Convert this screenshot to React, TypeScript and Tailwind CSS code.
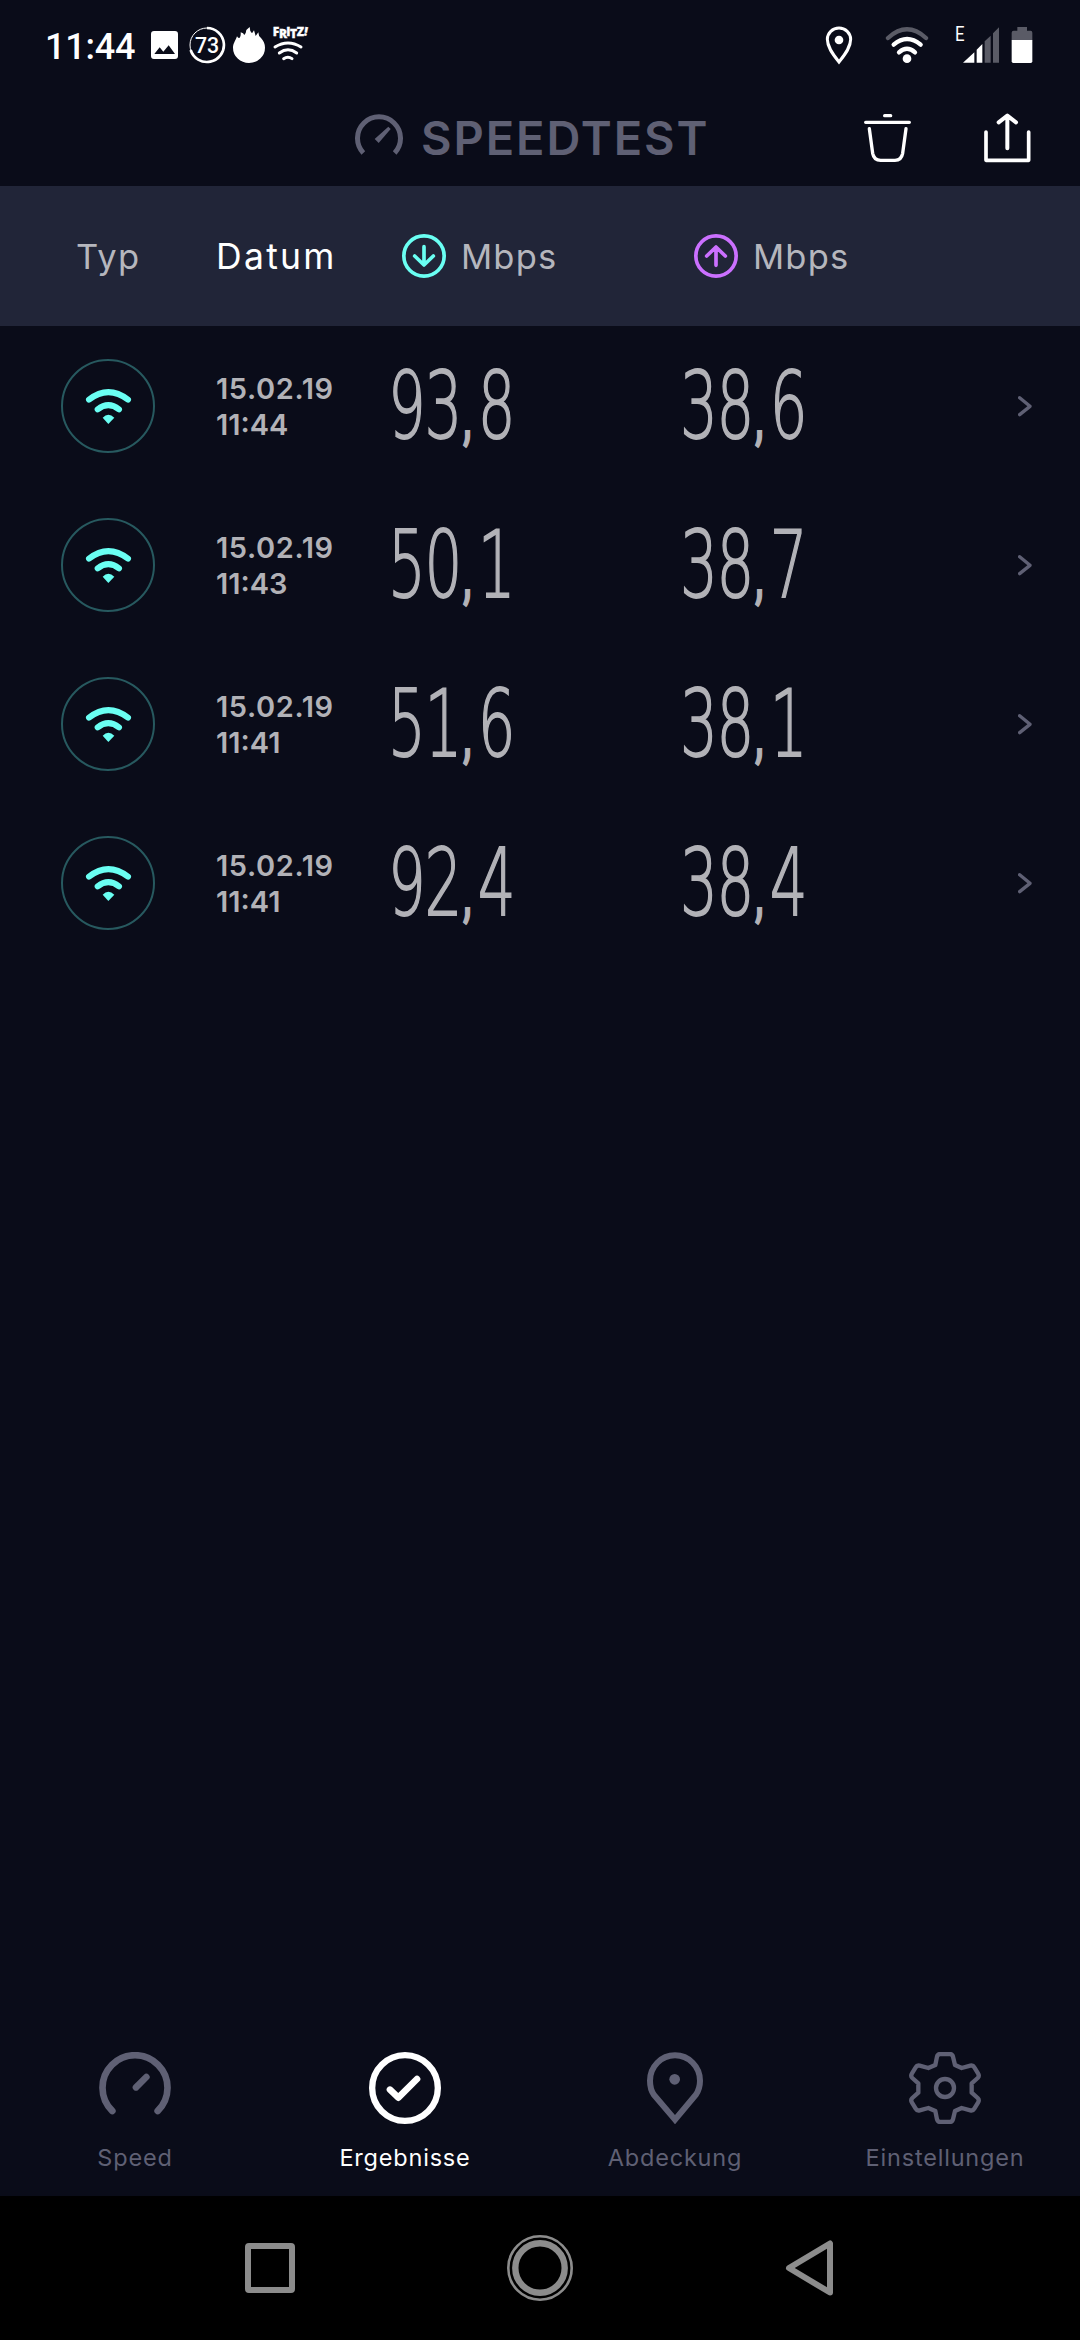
import type { ReactNode } from "react";

type Result = {
  date: string;
  time: string;
  download: string;
  upload: string;
};

const results: Result[] = [
  { date: "15.02.19", time: "11:44", download: "93,8", upload: "38,6" },
  { date: "15.02.19", time: "11:43", download: "50,1", upload: "38,7" },
  { date: "15.02.19", time: "11:41", download: "51,6", upload: "38,1" },
  { date: "15.02.19", time: "11:41", download: "92,4", upload: "38,4" },
];

export default function App() {
  return (
    <div className="flex h-[2340px] w-[1080px] flex-col overflow-hidden bg-[#0a0c19] font-['Inter',sans-serif]">
      <StatusBar />
      <AppBar />
      <TableHeader />
      <main className="flex-1">
        {results.map((result, index) => (
          <ResultRow key={index} result={result} />
        ))}
      </main>
      <TabBar />
      <SystemNav />
    </div>
  );
}

function StatusBar() {
  return (
    <header className="flex h-[90px] items-start text-white">
      <span className="ml-[45px] mt-[26px] w-[106px] font-['Roboto',sans-serif] text-[36px] leading-[42px] font-medium tracking-[-0.2px]">
        11:44
      </span>
      <svg className="mt-[31px] h-7 w-[27px]" viewBox="0 0 81 84" fill="currentColor">
        <path fillRule="evenodd" d="M9 0H72Q81 0 81 9V75Q81 84 72 84H9Q0 84 0 75V9Q0 0 9 0ZM10 69H72L53 43L37 62L26 49Z" />
      </svg>
      <svg className="ml-[10px] mt-[26px] h-[38px] w-[38px]" viewBox="0 0 114 114" fill="none" stroke="currentColor">
        <circle cx="57" cy="57" r="51" strokeWidth="3" />
        <path d="M57 6A51 51 0 1 1 8 72" strokeWidth="8" />
        <text x="57" y="80" textAnchor="middle" fill="currentColor" stroke="none" className="font-['Roboto',sans-serif] text-[64px] font-medium">
          73
        </text>
      </svg>
      <svg className="ml-[7px] mt-[27px] h-9 w-8" viewBox="0 0 96 108" fill="currentColor">
        <path d="M12 28Q16 35 20 32Q24 29 23 16Q32 18 34 24Q39 20 40 9L50 0Q50 13 57 19L63 10Q66 20 68 27L76 16Q76 27 84 33C92 43 96 50 96 62A48 46 0 0 1 0 62C0 50 7 42 12 28Z" />
      </svg>
      <svg className="ml-[7px] mt-[13px] h-12 w-[44px]" viewBox="0 -36 132 144" fill="none" stroke="currentColor" strokeWidth="9" strokeLinecap="round">
        <g fill="currentColor" stroke="currentColor" strokeWidth="1" className="font-['Open_Sans',sans-serif] text-[36px] font-extrabold">
          <text x="2" y="33">F</text>
          <text x="21" y="38">R</text>
          <text x="43" y="33">I</text>
          <text x="54" y="39">T</text>
          <text x="74" y="32">Z</text>
          <text x="96" y="31" transform="rotate(10 98 24)">!</text>
        </g>
        <path d="M9 66Q48 42 87 66M22 84Q48 65 74 84M35 101Q48 92 60 101" />
      </svg>

      <svg className="ml-auto mt-[26px] h-[39px] w-7" viewBox="76 48 84 117" fill="none" stroke="currentColor" strokeWidth="9">
        <path d="M118 156C97 130 83 110 83 88A35 34 0 0 1 153 88C153 110 139 130 118 156Z" />
        <circle cx="118" cy="90" r="13" fill="currentColor" stroke="none" />
      </svg>
      <svg className="ml-[32px] mt-[26px] h-[39px] w-11" viewBox="255 48 132 117" fill="none" stroke="currentColor" strokeWidth="13" strokeLinecap="round">
        <path d="M264 84Q321 32 378 84" stroke="#5a5b66" />
        <path d="M281 104Q321 70 362 104M297 127Q321 106 345 127" />
        <circle cx="321" cy="146" r="13" fill="currentColor" stroke="none" />
      </svg>
      <span className="mt-[22px] ml-[26px] w-3 origin-left scale-x-[0.8] font-['Roboto',sans-serif] text-[21px] leading-[25px]">E</span>
      <svg className="mt-[26px] -ml-[4px] h-[39px] w-[38px]" viewBox="488 48 114 117" fill="currentColor">
        <path d="M488 158L522 127V158ZM529 119L546 102V158H529Z" />
        <path d="M553 94L571 77V158H553ZM578 70L596 52V158H578Z" fill="#5a5b66" />
      </svg>
      <svg className="mr-[47px] ml-[10px] mt-[26px] h-[39px] w-[22px]" viewBox="633 48 66 117" fill="currentColor">
        <path d="M652 51H681V62H692Q697 62 697 68V91H635V68Q635 62 641 62H652Z" fill="#5a5b66" />
        <path d="M635 90H697V154Q697 159 692 159H640Q635 159 635 154Z" />
      </svg>
    </header>
  );
}

function AppBar() {
  return (
    <div className="flex h-24 items-start">
      <div className="ml-[355px] flex items-start text-[#5f6074]">
        <svg className="mt-[24px] h-[42px] w-12" viewBox="45 72 144 126" fill="none" stroke="currentColor" strokeWidth="15">
          <path d="M70 189A64.5 64.5 0 1 1 164 189" />
          <path d="M145 110L152 117L116 159L104 147Z" fill="currentColor" stroke="none" />
        </svg>
        <h1 className="mt-[18px] ml-[18px] w-[300px] text-[47px] leading-[60px] font-semibold tracking-[1.9px] whitespace-nowrap">
          SPEEDTEST
        </h1>
      </div>
      <svg className="mt-[22px] ml-auto h-[52px] w-[51px]" viewBox="66 66 153 156" fill="none" stroke="white" strokeWidth="10" strokeLinecap="round">
        <path d="M134 77H152M77 97H208M88 116L98 190Q102 211 122 211H165Q184 211 188 190L198 116" />
      </svg>
      <svg className="mt-[22px] mr-[47px] ml-[69px] h-[52px] w-[51px]" viewBox="426 66 153 156" fill="none" stroke="white" strokeWidth="12" strokeLinecap="round" strokeLinejoin="round">
        <path d="M438 126V211H566V126" strokeWidth="11" />
        <path d="M502 175V78M476 97L502 77L528 97" />
      </svg>
    </div>
  );
}

function TableHeader() {
  return (
    <div className="grid h-[140px] grid-cols-[217px_185px_292px_1fr] items-center bg-[#212538] text-[34.5px] leading-[42px] text-[#b5b6bd]">
      <span className="pt-[2px] pl-[76px] tracking-[1.2px]">Typ</span>
      <span className="-ml-px pt-[2px] text-[35.5px] tracking-[2.3px] text-white">Datum</span>
      <span className="flex items-center gap-[15px] tracking-[1.2px]">
        <ArrowCircle className="text-[#6afff3]" />
        <span className="pt-[2px]">Mbps</span>
      </span>
      <span className="flex items-center gap-[15px] tracking-[1.2px]">
        <ArrowCircle className="rotate-180 text-[#cb70ff]" />
        <span className="pt-[2px]">Mbps</span>
      </span>
    </div>
  );
}

function ArrowCircle({ className }: { className: string }) {
  return (
    <svg className={`h-11 w-11 ${className}`} viewBox="0 0 132 132" fill="none" stroke="currentColor" strokeWidth="11" strokeLinecap="round" strokeLinejoin="round">
      <circle cx="66" cy="66" r="60.5" />
      <path d="M66 38V93M38 66L66 93L94 66" />
    </svg>
  );
}

function ResultRow({ result }: { result: Result }) {
  return (
    <div className="grid h-[159px] grid-cols-[216px_174px_292px_336px_1fr] items-center text-[#b2b2b7]">
      <div className="mt-px ml-[61px] flex h-[94px] w-[94px] items-center justify-center rounded-full border-2 border-[#27595f]">
        <WifiIcon />
      </div>
      <div className="pt-[2px] text-[29px] leading-9 font-semibold">
        <p className="tracking-[0.6px]">{result.date}</p>
        <p>{result.time}</p>
      </div>
      <Speed value={result.download} />
      <Speed value={result.upload} />
      <svg className="h-[22px] w-[14px]" viewBox="0 0 42 66" fill="none" stroke="#5f6074" strokeWidth="10" strokeLinecap="round" strokeLinejoin="round">
        <path d="M5 8L36 34L5 59" />
      </svg>
    </div>
  );
}

function Speed({ value }: { value: string }) {
  const [whole, fraction] = value.split(",");

  return (
    <div className="-ml-[2px] origin-left scale-x-[0.64] font-['DejaVu_Sans',sans-serif] text-[93px] leading-[112px] font-extralight tracking-[-2px] whitespace-nowrap [-webkit-text-stroke:1.8px_currentColor]">
      {whole}
      <span className="inline-block w-[26px] pl-[3px] font-['Roboto',sans-serif] text-[60px] leading-none font-medium">,</span>
      {fraction}
    </div>
  );
}

function WifiIcon() {
  return (
    <svg className="h-[37px] w-[47px]" viewBox="135 560 141 111" fill="none" stroke="#6afff3" strokeWidth="18" strokeLinecap="round">
      <path d="M147 595Q205 550 264 595M173 624Q205 599 237 624" />
      <path d="M188 649Q205 631 223 649L205 668Z" fill="#6afff3" stroke="none" />
    </svg>
  );
}

function TabBar() {
  return (
    <nav className="grid h-[144px] grid-cols-4">
      <Tab label="Speed">
        <g strokeWidth="20">
          <path d="M40 177A97.5 97.5 0 1 1 176 177" />
          <path d="M111 106L142 75" />
        </g>
      </Tab>
      <Tab label="Ergebnisse" active>
        <circle cx="108" cy="108" r="98.5" strokeWidth="19" />
        <path d="M63 113L88 137L144 81" strokeWidth="20" />
      </Tab>
      <Tab label="Abdeckung">
        <path d="M108 203L45 129C36 116 33 102 33 86A75 76 0 0 1 183 86C183 102 179 116 170 129Z" strokeWidth="18" strokeLinejoin="miter" />
        <circle cx="107" cy="82" r="16" fill="currentColor" stroke="none" />
      </Tab>
      <Tab label="Einstellungen">
        <g strokeWidth="13">
          <circle cx="108" cy="108" r="27" />
          <path d="M79 39L84 14Q86 6 94 6H122Q130 6 132 14L138 39L158 48L184 41Q192 39 196 46L207 64Q212 72 206 78L188 94V122L206 138Q212 144 207 152L196 170Q192 177 184 175L158 168L138 177L132 202Q130 210 122 210H94Q86 210 84 202L79 177L58 168L32 175Q24 177 20 170L9 152Q4 144 10 138L28 122V94L10 78Q4 72 9 64L20 46Q24 39 32 41L58 48Z" />
        </g>
      </Tab>
    </nav>
  );
}

function Tab({ label, active = false, children }: { label: string; active?: boolean; children: ReactNode }) {
  return (
    <div className={active ? "flex flex-col items-center text-white" : "flex flex-col items-center text-[#5f6074]"}>
      <svg className="h-[72px] w-[72px]" viewBox="0 0 216 216" fill="none" stroke="currentColor" strokeLinecap="round" strokeLinejoin="round">
        {children}
      </svg>
      <span className="mt-[18px] text-[23.5px] leading-8 tracking-[0.8px]">{label}</span>
    </div>
  );
}

function SystemNav() {
  return (
    <footer className="flex h-[144px] items-center justify-center gap-[212px] bg-black text-[#8c8c8c]">
      <div className="h-[50px] w-[50px] rounded-[4px] border-6 border-current" />
      <svg className="h-[66px] w-[66px]" viewBox="0 0 66 66" fill="none" stroke="currentColor">
        <circle cx="33" cy="33" r="31.7" strokeWidth="2.6" />
        <circle cx="33" cy="33" r="24.7" strokeWidth="6.4" />
      </svg>
      <svg className="h-[58px] w-[50px]" viewBox="0 0 50 58" fill="none" stroke="currentColor" strokeWidth="6" strokeLinejoin="round">
        <path d="M4 29L45 4.5V53.5Z" />
      </svg>
    </footer>
  );
}
